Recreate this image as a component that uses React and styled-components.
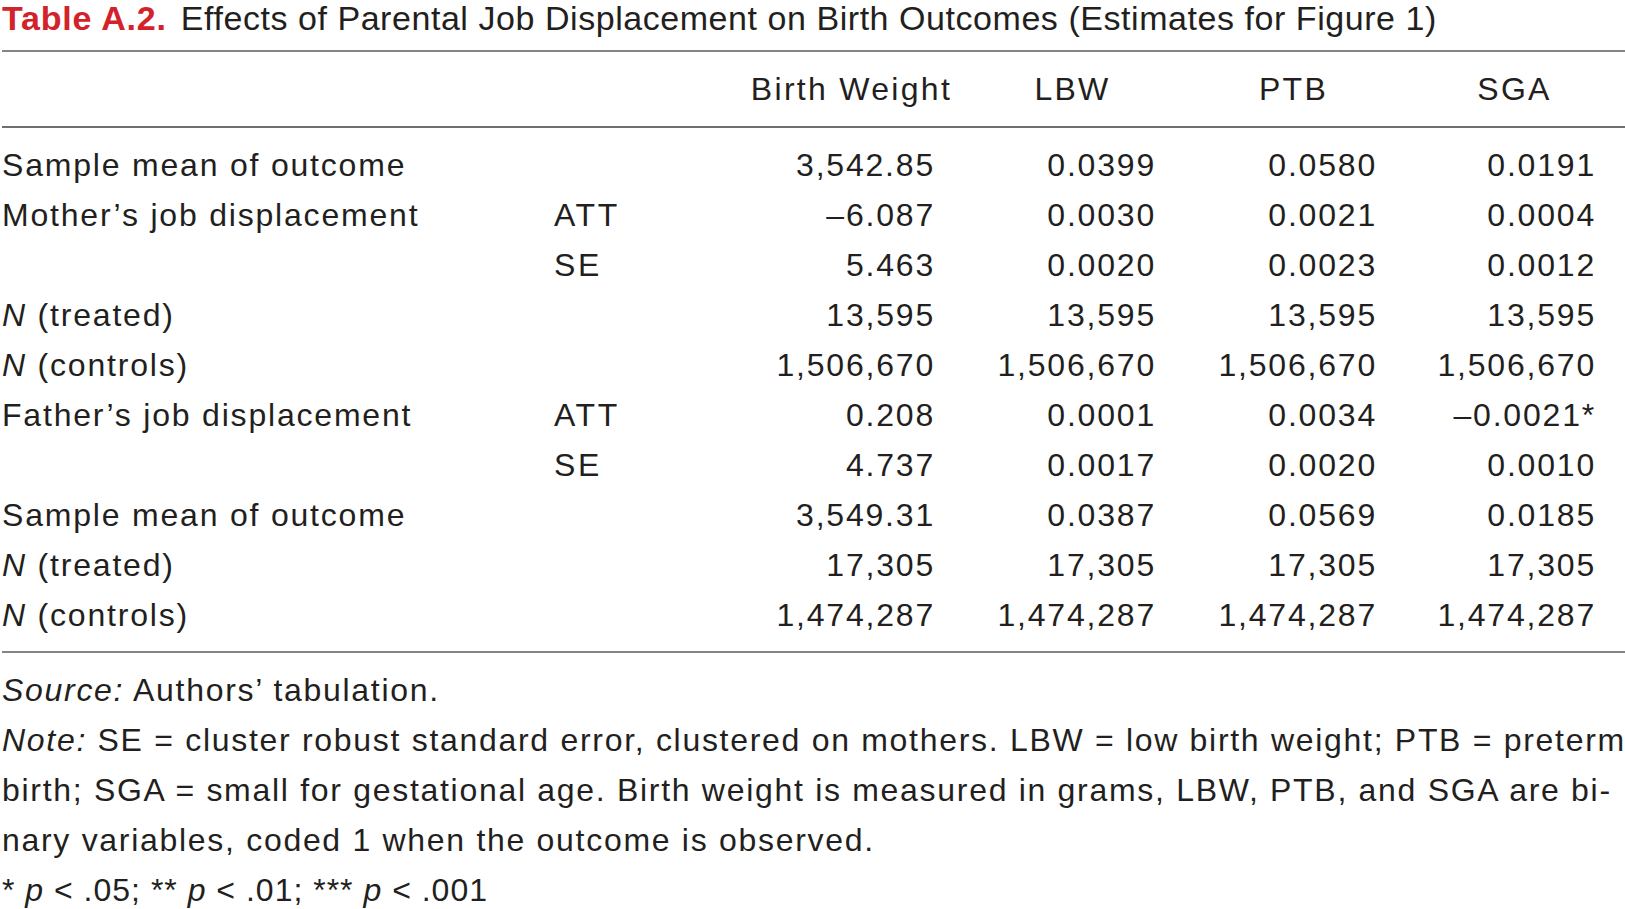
import React from "react";
import styled, { createGlobalStyle } from "styled-components";

const Global = createGlobalStyle`
  html, body { margin: 0; padding: 0; background: #ffffff; }
  body {
    font-family: "Liberation Sans", Arial, sans-serif;
    color: #231f20;
    font-size: 32px;
  }
`;

const Page = styled.div`
  width: 1625px;
  padding: 0 0 0 2px;
  box-sizing: border-box;
`;

const Title = styled.h1`
  margin: 0;
  height: 50px;
  display: flex;
  align-items: flex-start;
  font-size: 34px;
  font-weight: 400;
  line-height: 36px;
  letter-spacing: 0.55px;
  white-space: nowrap;
`;

const Label = styled.span`
  color: #d2232a;
  font-weight: 700;
  margin-right: 14px;
  letter-spacing: 0.8px;
`;

const Table = styled.table`
  width: 100%;
  border-collapse: collapse;
  table-layout: fixed;
  border-top: 2px solid #858585;
  border-bottom: 2px solid #858585;
`;

const HeadRow = styled.tr`
  height: 76px;
  border-bottom: 2px solid #6f6f6f;
`;

const HeadCell = styled.th`
  font-weight: 400;
  text-align: center;
  padding: 0;
  letter-spacing: 2.3px;
  vertical-align: middle;
`;

const Spacer = styled.tr`
  height: ${(p) => p.$h}px;
`;

const Row = styled.tr`
  height: 50px;
`;

const NameCell = styled.td`
  padding: 0;
  white-space: nowrap;
  letter-spacing: 1.8px;
`;

const StatCell = styled.td`
  padding: 0;
  letter-spacing: 2.6px;
`;

const NumCell = styled.td`
  padding: 0 ${(p) => (p.$last ? 29 : 27)}px 0 0;
  text-align: right;
  white-space: nowrap;
  letter-spacing: 1.8px;
`;

const Notes = styled.div`
  padding-top: 12px;
  line-height: 50px;
  letter-spacing: 1.7px;
  white-space: nowrap;
`;

const NoteLine = styled.div``;

const SigLine = styled.div`
  letter-spacing: 1px;
`;

const Em = styled.i`
  font-style: italic;
`;

const rows = [
  { name: "Sample mean of outcome", stat: "", vals: ["3,542.85", "0.0399", "0.0580", "0.0191"] },
  { name: "Mother’s job displacement", stat: "ATT", vals: ["–6.087", "0.0030", "0.0021", "0.0004"] },
  { name: "", stat: "SE", vals: ["5.463", "0.0020", "0.0023", "0.0012"] },
  { n: true, name: " (treated)", stat: "", vals: ["13,595", "13,595", "13,595", "13,595"] },
  { n: true, name: " (controls)", stat: "", vals: ["1,506,670", "1,506,670", "1,506,670", "1,506,670"] },
  { name: "Father’s job displacement", stat: "ATT", vals: ["0.208", "0.0001", "0.0034", "–0.0021*"] },
  { name: "", stat: "SE", vals: ["4.737", "0.0017", "0.0020", "0.0010"] },
  { name: "Sample mean of outcome", stat: "", vals: ["3,549.31", "0.0387", "0.0569", "0.0185"] },
  { n: true, name: " (treated)", stat: "", vals: ["17,305", "17,305", "17,305", "17,305"] },
  { n: true, name: " (controls)", stat: "", vals: ["1,474,287", "1,474,287", "1,474,287", "1,474,287"] },
];

export default function App() {
  return (
    <Page>
      <Global />
      <Title>
        <Label>Table A.2.</Label>
        Effects of Parental Job Displacement on Birth Outcomes (Estimates for Figure 1)
      </Title>
      <Table>
        <colgroup>
          <col style={{ width: 552 }} />
          <col style={{ width: 187 }} />
          <col style={{ width: 221 }} />
          <col style={{ width: 221 }} />
          <col style={{ width: 221 }} />
          <col style={{ width: 221 }} />
        </colgroup>
        <thead>
          <HeadRow>
            <HeadCell />
            <HeadCell />
            <HeadCell>Birth Weight</HeadCell>
            <HeadCell>LBW</HeadCell>
            <HeadCell>PTB</HeadCell>
            <HeadCell>SGA</HeadCell>
          </HeadRow>
        </thead>
        <tbody>
          <Spacer $h={13} />
          {rows.map((r, i) => (
            <Row key={i}>
              <NameCell>
                {r.n && <Em>N</Em>}
                {r.name}
              </NameCell>
              <StatCell>{r.stat}</StatCell>
              {r.vals.map((v, j) => (
                <NumCell key={j} $last={j === r.vals.length - 1}>
                  {v}
                </NumCell>
              ))}
            </Row>
          ))}
          <Spacer $h={12} />
        </tbody>
      </Table>
      <Notes>
        <NoteLine>
          <Em>Source:</Em> Authors’ tabulation.
        </NoteLine>
        <NoteLine>
          <Em>Note:</Em> SE = cluster robust standard error, clustered on mothers. LBW = low birth weight; PTB = preterm
          <br />
          birth; SGA = small for gestational age. Birth weight is measured in grams, LBW, PTB, and SGA are bi-
          <br />
          nary variables, coded 1 when the outcome is observed.
        </NoteLine>
        <SigLine>
          * <Em>p</Em> &lt; .05; ** <Em>p</Em> &lt; .01; *** <Em>p</Em> &lt; .001
        </SigLine>
      </Notes>
    </Page>
  );
}
